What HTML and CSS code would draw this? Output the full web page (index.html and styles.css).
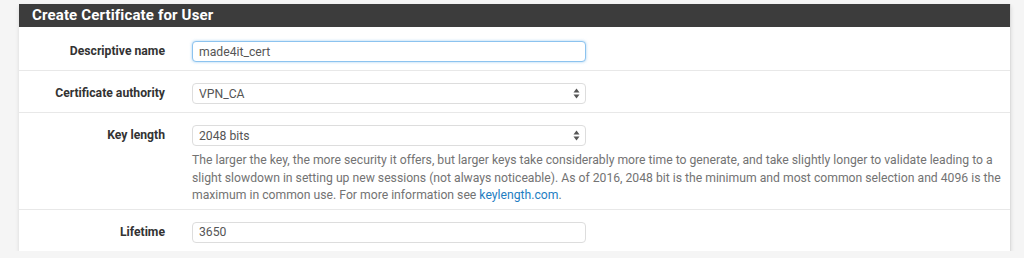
FILE: index.html
```html
<!DOCTYPE html>
<html lang="en">
<head>
  <meta charset="UTF-8">
  <title>Create Certificate for User</title>
  <link rel="stylesheet" href="styles.css">
</head>
<body>
  <div class="panel">
    <div class="panel-heading">Create Certificate for User</div>
    <div class="panel-body">
      <div class="form-row">
        <label for="descr">Descriptive name</label>
        <div class="field">
          <input type="text" id="descr" class="focused" value="made4it_cert">
        </div>
      </div>
      <div class="form-row">
        <label for="caref">Certificate authority</label>
        <div class="field">
          <div class="select-wrap">
            <select id="caref">
              <option>VPN_CA</option>
            </select>
            <svg class="arrows" width="7" height="11" viewBox="0 0 7 11"><path d="M3.5 0.5 L6.5 4.5 H0.5 Z M3.5 10.5 L6.5 6.5 H0.5 Z" fill="#555"/></svg>
          </div>
        </div>
      </div>
      <div class="form-row with-help">
        <label for="keylen">Key length</label>
        <div class="field">
          <div class="select-wrap">
            <select id="keylen">
              <option>2048 bits</option>
            </select>
            <svg class="arrows" width="7" height="11" viewBox="0 0 7 11"><path d="M3.5 0.5 L6.5 4.5 H0.5 Z M3.5 10.5 L6.5 6.5 H0.5 Z" fill="#555"/></svg>
          </div>
          <p class="help">The larger the key, the more security it offers, but larger keys take considerably more time to generate, and take slightly longer to validate leading to a slight slowdown in setting up new sessions (not always noticeable). As of 2016, 2048 bit is the minimum and most common selection and 4096 is the maximum in common use. For more information see <a href="#">keylength.com</a>.</p>
        </div>
      </div>
      <div class="form-row">
        <label for="lifetime">Lifetime</label>
        <div class="field">
          <input type="text" id="lifetime" value="3650">
        </div>
      </div>
    </div>
  </div>
</body>
</html>
```

FILE: styles.css
```css
body { margin: 0; background: #f5f5f5; font-family: Roboto, "Liberation Sans", Arial, sans-serif; color: #333; padding: 4px 13px 0 19px;}
.panel { background: #fff; box-shadow: 0 2px 4px rgba(0,0,0,0.12); border-right: 1px solid #ddd;}
.panel-heading { background: #3c3c3c; color: #fff; font-weight: 700; font-size: 15px; height: 23px; line-height: 23px; padding-left: 13px; letter-spacing: 0.15px;}
.form-row { display: grid; grid-template-columns: 146px 1fr; column-gap: 27px; padding: 12px 0 8px 0; border-top: 1px solid #e8e8e8;}
.form-row:first-child { border-top: none; padding-top: 14px;}
.form-row.with-help { padding-bottom: 4px;}
.form-row label { text-align: right; font-weight: 700; font-size: 12.2px; line-height: 20px; color: #333;}
.field { min-width: 0;}
input, select { box-sizing: border-box; width: 394px; height: 21px; font-family: Roboto, "Liberation Sans", Arial, sans-serif; font-size: 12.2px; color: #555; border: 1px solid #ddd; border-radius: 4px; padding: 0 6px; background: #fff; outline: none; display: block;}
input.focused { border-color: #8cc3ef; box-shadow: 0 0 3px rgba(102,175,233,0.6);}
.select-wrap { position: relative; width: 394px;}
select { appearance: none; -webkit-appearance: none;}
.arrows { position: absolute; right: 6px; top: 5px; pointer-events: none;}
.help { margin: 6px 0 0 0; font-size: 12.2px; line-height: 17.5px; color: #737373; max-width: 815px;}
.help a { color: #1f7ec2; text-decoration: none;}
```
